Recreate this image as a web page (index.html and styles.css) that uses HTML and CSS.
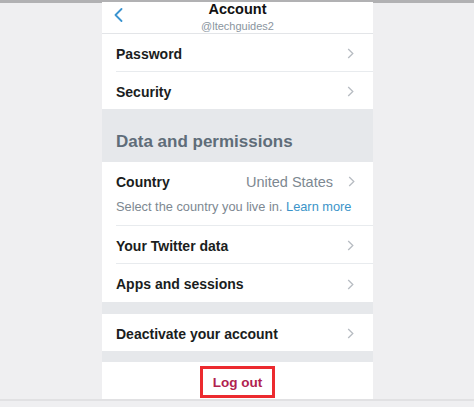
FILE: index.html
```html
<!DOCTYPE html>
<html lang="en">
<head>
<meta charset="utf-8">
<title>Account</title>
<link rel="stylesheet" href="styles.css">
</head>
<body>
<div class="topbar"></div>
<div class="stage">
  <div class="panel">
    <header class="header">
      <svg class="back" width="9" height="14" viewBox="0 0 9 14"><path d="M7.5 1 L1.5 7 L7.5 13" fill="none" stroke="#3b94d0" stroke-width="1.8" stroke-linecap="round" stroke-linejoin="round"/></svg>
      <div class="title">Account</div>
      <div class="handle">@ltechguides2</div>
    </header>
    <section class="group">
      <div class="row sep"><span class="label">Password</span><svg class="chev" width="7" height="11" viewBox="0 0 7 11"><path d="M1.2 1 L5.8 5.5 L1.2 10" fill="none" stroke="#b7bcc2" stroke-width="1.3"/></svg></div>
      <div class="row short"><span class="label">Security</span><svg class="chev" width="7" height="11" viewBox="0 0 7 11"><path d="M1.2 1 L5.8 5.5 L1.2 10" fill="none" stroke="#b7bcc2" stroke-width="1.3"/></svg></div>
    </section>
    <div class="section-title">Data and permissions</div>
    <section class="group">
      <div class="country sep">
        <div class="country-line"><span class="label">Country</span><span class="value">United States</span><svg class="chev" width="7" height="11" viewBox="0 0 7 11"><path d="M1.2 1 L5.8 5.5 L1.2 10" fill="none" stroke="#b7bcc2" stroke-width="1.3"/></svg></div>
        <div class="hint">Select the country you live in. <span class="link">Learn more</span></div>
      </div>
      <div class="row sep"><span class="label">Your Twitter data</span><svg class="chev" width="7" height="11" viewBox="0 0 7 11"><path d="M1.2 1 L5.8 5.5 L1.2 10" fill="none" stroke="#b7bcc2" stroke-width="1.3"/></svg></div>
      <div class="row"><span class="label">Apps and sessions</span><svg class="chev" width="7" height="11" viewBox="0 0 7 11"><path d="M1.2 1 L5.8 5.5 L1.2 10" fill="none" stroke="#b7bcc2" stroke-width="1.3"/></svg></div>
    </section>
    <div class="gap"></div>
    <section class="group">
      <div class="row short"><span class="label">Deactivate your account</span><svg class="chev" width="7" height="11" viewBox="0 0 7 11"><path d="M1.2 1 L5.8 5.5 L1.2 10" fill="none" stroke="#b7bcc2" stroke-width="1.3"/></svg></div>
    </section>
    <div class="gap small"></div>
    <section class="group logout-row">
      <span class="logout">Log out</span>
    </section>
  </div>
</div>
<div class="footline"></div>
</body>
</html>
```

FILE: styles.css
```css
* { box-sizing: border-box; }
html, body {
  margin: 0;
  padding: 0;
  background: #efeff1;
  font-family: "Liberation Sans", Arial, sans-serif;
  color: #16191c;
}
body { width: 474px; height: 407px; overflow: hidden; }
.topbar {
  height: 3px;
  background: #b1b1b3;
}
.stage {
  padding-left: 102px;
}
.panel {
  width: 271px;
  background: #e6e8eb;
}
.header {
  position: relative;
  height: 32px;
  background: #fff;
  border-bottom: 1px solid #e3e5e8;
  text-align: center;
}
.back {
  position: absolute;
  left: 12px;
  top: 6px;
}
.title {
  font-size: 14.5px;
  font-weight: bold;
  line-height: 15px;
  margin-top: -1px;
  color: #111;
}
.handle {
  font-size: 11px;
  line-height: 13px;
  margin-top: 3px;
  color: #8a959e;
}
.group {
  background: #fff;
  padding-left: 14px;
}
.row {
  height: 38px;
  display: flex;
  align-items: center;
  justify-content: space-between;
  padding: 2px 19px 0 0;
}
.row.short { height: 37px; }
.sep { border-bottom: 1px solid #e8ebee; }
.label {
  font-size: 14px;
  font-weight: bold;
  color: #1a1d20;
}
.chev { display: block; }
.section-title {
  height: 53px;
  padding: 23px 14px 0;
  font-size: 17px;
  font-weight: bold;
  line-height: 20px;
  color: #5f6d79;
}
.country {
  height: 64px;
  padding-top: 11px;
  padding-right: 18px;
}
.country-line {
  display: flex;
  align-items: center;
  height: 17px;
}
.country-line .label { flex: 1; }
.value {
  font-size: 14.5px;
  color: #7d8891;
  margin-right: 15px;
}
.hint {
  margin-top: 9px;
  font-size: 12.8px;
  line-height: 16px;
  white-space: nowrap;
  color: #7d8891;
}
.link { color: #3b94c9; }
.gap { height: 12px; }
.gap.small { height: 11px; }
.logout-row {
  height: 37px;
  padding: 4px 0 0;
  display: flex;
  justify-content: center;
  align-items: flex-start;
}
.logout {
  display: block;
  border: 3px solid #ec2a2f;
  padding: 5px 10px 4px;
  font-size: 13.5px;
  line-height: 17px;
  font-weight: bold;
  color: #b0214f;
}
.footline {
  height: 2px;
  background: #e1e1e3;
}
```
